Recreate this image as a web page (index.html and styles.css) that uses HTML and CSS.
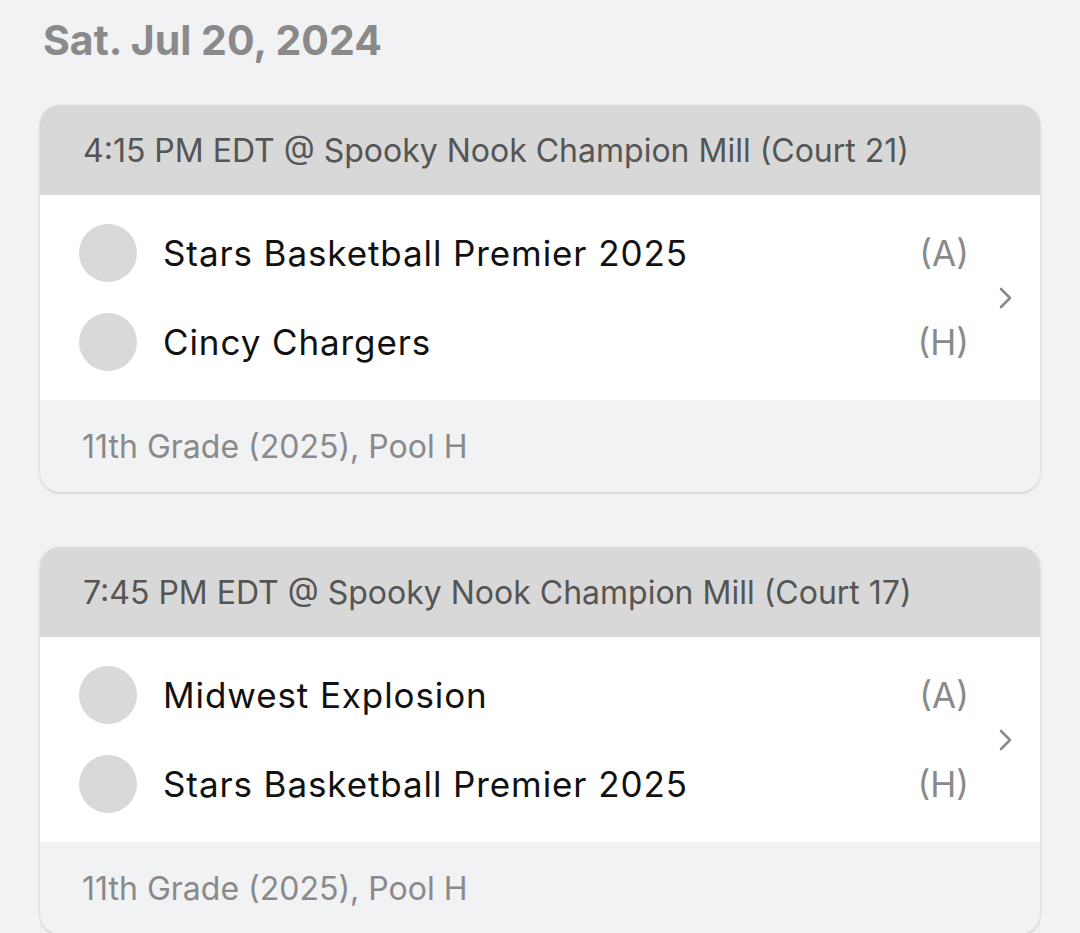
FILE: index.html
```html
<!DOCTYPE html>
<html>
<head>
<meta charset="utf-8">
<link rel="stylesheet" href="styles.css">
</head>
<body>
<div class="page">
  <h1 class="date">Sat. Jul 20, 2024</h1>

  <div class="card">
    <div class="card-head">4:15 PM EDT @ Spooky Nook Champion Mill (Court 21)</div>
    <div class="card-body">
      <div class="teams">
        <div class="team"><span class="logo"></span><span class="name">Stars Basketball Premier 2025</span><span class="side">(A)</span></div>
        <div class="team"><span class="logo"></span><span class="name">Cincy Chargers</span><span class="side">(H)</span></div>
      </div>
      <svg class="chev" width="16" height="24" viewBox="0 0 16 24"><path d="M3 3 L12 12 L3 21" fill="none" stroke="#8a8a8a" stroke-width="2.6" stroke-linecap="round" stroke-linejoin="round"/></svg>
    </div>
    <div class="card-foot">11th Grade (2025), Pool H</div>
  </div>

  <div class="card">
    <div class="card-head">7:45 PM EDT @ Spooky Nook Champion Mill (Court 17)</div>
    <div class="card-body">
      <div class="teams">
        <div class="team"><span class="logo"></span><span class="name">Midwest Explosion</span><span class="side">(A)</span></div>
        <div class="team"><span class="logo"></span><span class="name">Stars Basketball Premier 2025</span><span class="side">(H)</span></div>
      </div>
      <svg class="chev" width="16" height="24" viewBox="0 0 16 24"><path d="M3 3 L12 12 L3 21" fill="none" stroke="#8a8a8a" stroke-width="2.6" stroke-linecap="round" stroke-linejoin="round"/></svg>
    </div>
    <div class="card-foot">11th Grade (2025), Pool H</div>
  </div>
</div>
</body>
</html>
```

FILE: styles.css
```css
html, body {
  margin: 0;
  padding: 0;
  background: #f1f2f4;
}
body {
  font-family: Inter, "Noto Sans", sans-serif;
}
.page {
  padding: 0 40px 0 40px;
}
.date {
  margin: 0;
  padding: 17px 0 0 3px;
  height: 105px;
  box-sizing: border-box;
  font-size: 41px;
  font-weight: 700;
  color: #8a8a8a;
  line-height: 46px;
}
.card {
  background: #f1f2f4;
  border-radius: 20px;
  box-shadow: 0 1px 3px rgba(0,0,0,0.18);
  overflow: hidden;
  margin-bottom: 55px;
}
.card-head {
  background: #d8d8d8;
  height: 90px;
  display: flex;
  align-items: center;
  padding-left: 43px;
  font-size: 32px;
  color: #555555;
}
.card-body {
  background: #ffffff;
  height: 205px;
  display: flex;
  align-items: center;
  padding: 0 26px 0 39px;
}
.teams {
  flex: 1;
  display: flex;
  flex-direction: column;
  gap: 31px;
}
.team {
  display: flex;
  align-items: center;
  height: 58px;
}
.logo {
  width: 58px;
  height: 58px;
  border-radius: 50%;
  background: #d9d9d9;
  flex: none;
}
.name {
  flex: 1;
  margin-left: 26px;
  font-size: 35px;
  letter-spacing: 0.9px;
  color: #111111;
}
.side {
  font-size: 35px;
  color: #8a8a8a;
  margin-right: 29px;
}
.chev {
  flex: none;
}
.card-foot {
  height: 92px;
  display: flex;
  align-items: center;
  padding-left: 42px;
  font-size: 32px;
  color: #8a8a8a;
}
```
